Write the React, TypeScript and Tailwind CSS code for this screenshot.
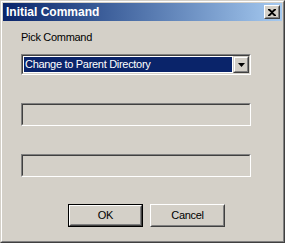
const font = { fontFamily: '"Liberation Sans", Arial, sans-serif' };

function Sunken({ className = "", children }: { className?: string; children?: React.ReactNode }) {
  return (
    <div className={`border border-t-[#808080] border-l-[#808080] border-b-white border-r-white ${className}`}>
      <div className="h-full border border-t-[#404040] border-l-[#404040] border-b-[#d4d0c8] border-r-[#d4d0c8]">
        {children}
      </div>
    </div>
  );
}

function Button({ label, isDefault }: { label: string; isDefault?: boolean }) {
  const inner = (
    <div className="h-full border border-t-white border-l-white border-b-[#404040] border-r-[#404040]">
      <div className="h-full flex items-center justify-center border border-transparent border-b-[#808080] border-r-[#808080] text-[11px] tracking-[-0.3px] text-black">
        {label}
      </div>
    </div>
  );
  if (isDefault) {
    return <div className="w-[75px] h-[23px] border border-black bg-[#d4d0c8]">{inner}</div>;
  }
  return <div className="w-[75px] h-[23px] bg-[#d4d0c8]">{inner}</div>;
}

export default function App() {
  return (
    <div style={font} className="w-[285px] h-[243px] bg-[#d4d0c8] border border-t-[#d4d0c8] border-l-[#d4d0c8] border-b-[#404040] border-r-[#404040]">
      <div className="h-full border border-t-white border-l-white border-b-[#808080] border-r-[#808080] p-px flex flex-col">
        {/* title bar */}
        <div className="h-[18px] flex items-center justify-between pl-[3px] pr-[2px] bg-gradient-to-r from-[#0a246a] to-[#a6caf0]">
          <span className="text-white font-bold text-[12px] leading-none">Initial Command</span>
          <div className="w-[16px] h-[14px] bg-[#d4d0c8] border border-t-white border-l-white border-b-[#404040] border-r-[#404040]">
            <div className="h-full flex items-center justify-center border border-transparent border-b-[#808080] border-r-[#808080]">
              <svg width="8" height="7" viewBox="0 0 8 7">
                <path d="M0 0h2l2 2 2-2h2v1L5 3.5 8 6v1H6L4 5 2 7H0V6l3-2.5L0 1z" fill="#000" />
              </svg>
            </div>
          </div>
        </div>

        {/* body */}
        <div className="pl-[18px] flex flex-col text-[11px] tracking-[-0.3px]">
          <div className="mt-[10px] leading-[13px] text-black">Pick Command</div>

          <Sunken className="mt-[10px] w-[230px] h-[21px]">
            <div className="h-full flex bg-white">
              <div className="flex-1 m-px bg-[#0a246a] text-white flex items-center pl-[1px]">
                Change to Parent Directory
              </div>
              <div className="w-[16px] bg-[#d4d0c8] border border-t-[#d4d0c8] border-l-[#d4d0c8] border-b-[#404040] border-r-[#404040]">
                <div className="h-full flex items-center justify-center border border-t-white border-l-white border-b-[#808080] border-r-[#808080]">
                  <svg width="7" height="4" viewBox="0 0 7 4">
                    <path d="M0 0h7L3.5 4z" fill="#000" />
                  </svg>
                </div>
              </div>
            </div>
          </Sunken>

          <Sunken className="mt-[28px] w-[230px] h-[23px]" />
          <Sunken className="mt-[28px] w-[230px] h-[23px]" />

          <div className="mt-[27px] ml-[47px] flex gap-[7px]">
            <Button label="OK" isDefault />
            <Button label="Cancel" />
          </div>
        </div>
      </div>
    </div>
  );
}
